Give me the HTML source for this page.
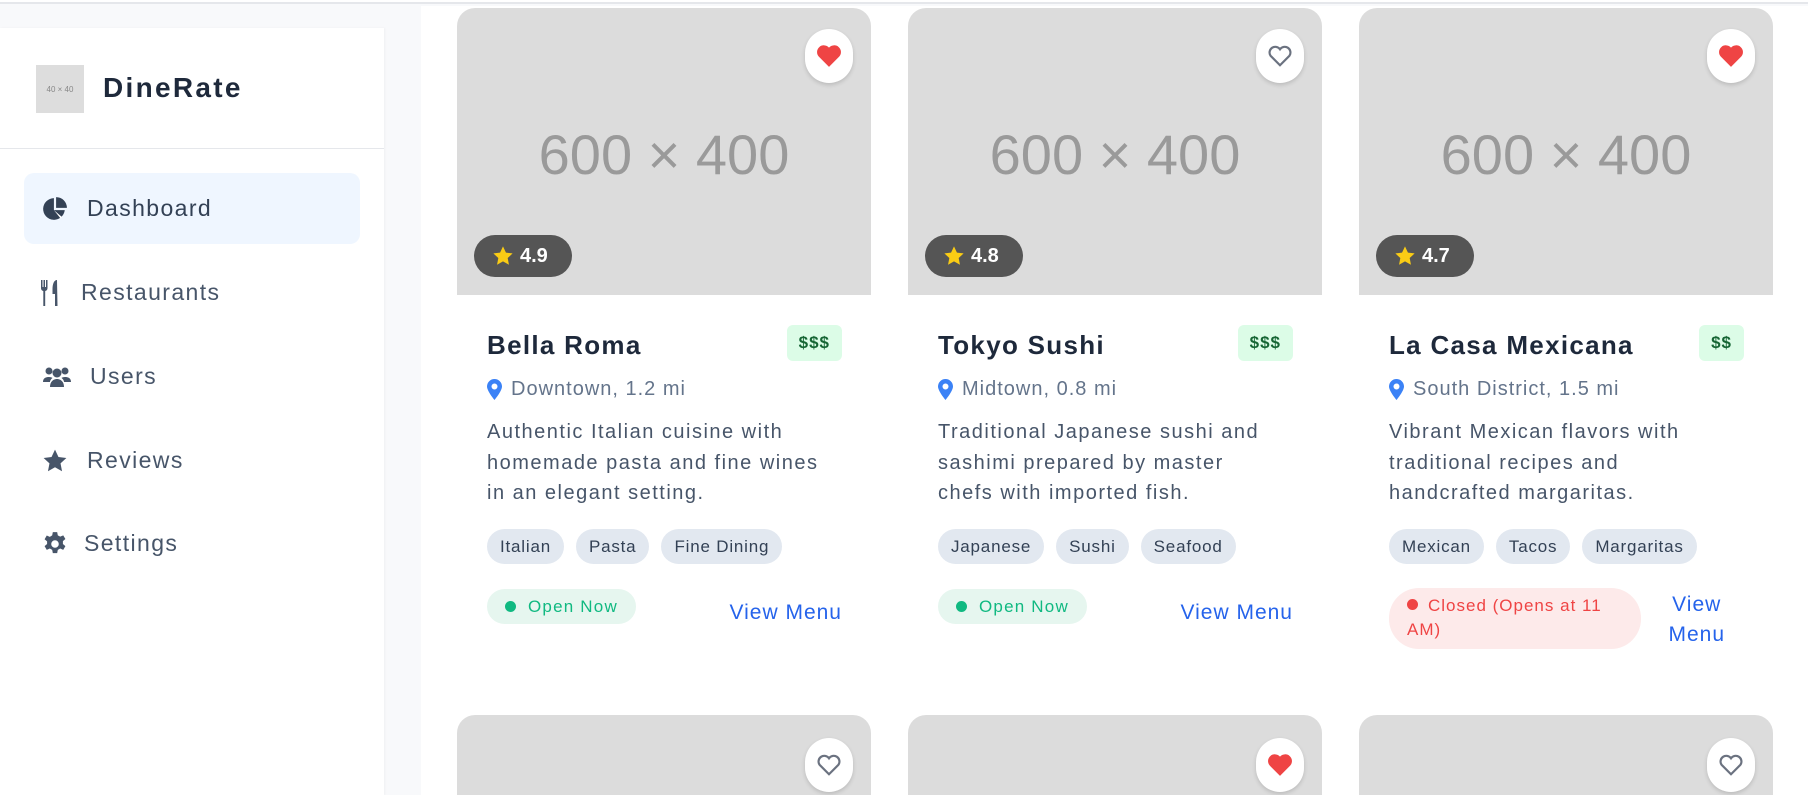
<!DOCTYPE html>
<html><head><meta charset="utf-8"><style>
*{margin:0;padding:0;box-sizing:border-box}
body{width:1808px;height:795px;overflow:hidden;background:#f8f9fb;font-family:"Liberation Sans",sans-serif;position:relative}
.topline{position:absolute;left:0;top:0;width:1808px;height:4px;background:#fff;border-bottom:2px solid #e5e7eb}
.side{position:absolute;left:0;top:28px;width:384px;height:767px;background:#fff;box-shadow:1px 0 2px rgba(0,0,0,.04)}
.logo{position:absolute;left:36px;top:37px;width:48px;height:48px;background:#ddd;color:#888;font-size:8px;display:flex;align-items:center;justify-content:center}
.brand{position:absolute;left:103px;top:44px;font-size:28px;font-weight:bold;color:#1e293b;letter-spacing:2.3px}
.div{position:absolute;left:0;top:120px;width:384px;height:1px;background:#e5e7eb}
.nav{position:absolute;left:24px;width:336px;height:71px;display:flex;align-items:center;font-size:23px;color:#475569;letter-spacing:1.4px}
.nav.act{background:#eff6ff;border-radius:10px;color:#334155}
.nav svg{position:absolute;left:18px}
.nav span{position:absolute}
.main{position:absolute;left:421px;top:6px;width:1387px;height:789px;background:#fff}
.card{position:absolute;width:414px;height:700px;background:#fff}
.img{position:absolute;left:0;top:0;width:414px;height:287px;background:#dcdcdc;border-radius:18px 18px 0 0}
.ph{position:absolute;left:0;width:100%;top:114px;text-align:center;font-size:56px;color:#9a9a9a}
.heart{position:absolute;left:348px;top:21px;width:48px;height:54px;border-radius:24px;background:#fff;box-shadow:0 2px 4px rgba(0,0,0,.15);display:flex;align-items:center;justify-content:center}
.rate{position:absolute;left:17px;top:227px;width:98px;height:42px;border-radius:21px;background:#555;color:#fff;font-weight:bold;font-size:20px;display:flex;align-items:center;padding-left:18px;gap:6px}
.title{position:absolute;left:30px;top:322px;font-size:26px;font-weight:bold;color:#1e293b;letter-spacing:1.3px}
.price{position:absolute;right:29px;top:317px;height:36px;padding:0 12px;border-radius:6px;background:#dcfce7;color:#166534;font-size:17px;font-weight:bold;display:flex;align-items:center;letter-spacing:1px}
.loc{position:absolute;left:30px;top:370px;font-size:20px;color:#64748b;display:flex;align-items:center;gap:9px;letter-spacing:1px}
.desc{position:absolute;left:30px;top:409px;font-size:20px;line-height:30.5px;color:#475569;letter-spacing:1.5px}
.tags{position:absolute;left:30px;top:521px;display:flex;gap:12px}
.tag{height:35px;padding:0 13px;border-radius:18px;background:#e2e8f0;color:#334155;font-size:17px;display:flex;align-items:center;letter-spacing:0.8px}
.open{position:absolute;left:30px;top:581px;height:35px;padding:0 18px 0 18px;border-radius:18px;background:#e6f6ef;color:#10b981;font-size:17px;display:flex;align-items:center;gap:12px;letter-spacing:1.2px}
.dot{width:11px;height:11px;border-radius:50%;background:currentColor;display:inline-block}
.vm{position:absolute;right:29px;top:593px;color:#2563eb;font-size:21px;letter-spacing:1px}
</style></head><body>
<div class="topline"></div>
<div class="side">
 <div class="logo">40 × 40</div>
 <div class="brand">DineRate</div>
 <div class="div"></div>
 <div class="nav act" style="top:145px"><svg width="26" height="26" viewBox="0 0 24 24"><path fill="#334155" d="M11 2A10 10 0 1 0 21 13H11z"/><path fill="#334155" d="M13 1v10h10A10 10 0 0 0 13 1z"/><path fill="#fff" d="M11 13l6 7.5 1.5-1z"/></svg><span style="left:63px">Dashboard</span></div>
 <div class="nav" style="top:229px"><svg width="22" height="26" viewBox="0 0 22 26" style="left:16px"><path fill="#475569" d="M1 0h1.5v7h1V0H5v7h1V0h1.5v8a3 3 0 0 1-2.3 3V26H3.3V11A3 3 0 0 1 1 8z"/><path fill="#475569" d="M17 0c-3 0-4.5 4-4.5 9v5H15v12h2.5z"/></svg><span style="left:57px">Restaurants</span></div>
 <div class="nav" style="top:313px"><svg width="30" height="24" viewBox="0 0 30 24"><circle cx="7" cy="6" r="3.5" fill="#475569"/><circle cx="23" cy="6" r="3.5" fill="#475569"/><circle cx="15" cy="8" r="4.5" fill="#475569"/><path fill="#475569" d="M1 17c0-4 3-5 6-5 2 0 3 .5 3.5 1C8.5 14.5 8 16 8 17zM29 17c0-4-3-5-6-5-2 0-3 .5-3.5 1 2 1.5 2.5 3 2.5 4zM8 22c0-5 3-8 7-8s7 3 7 8z"/></svg><span style="left:66px">Users</span></div>
 <div class="nav" style="top:397px"><svg width="26" height="26" viewBox="0 0 24 24"><path fill="#475569" d="M12 1.5l3.2 6.8 7.3.9-5.4 5 1.4 7.3L12 17.8l-6.5 3.7 1.4-7.3-5.4-5 7.3-.9z"/></svg><span style="left:63px">Reviews</span></div>
 <div class="nav" style="top:480px"><svg width="26" height="26" viewBox="0 0 24 24"><path fill="#475569" fill-rule="evenodd" d="M10 1h4l.6 3 2.2 1.2 2.8-1.2 2 3.4-2.3 2v2.6l2.3 2-2 3.4-2.8-1.2-2.2 1.2-.6 3h-4l-.6-3-2.2-1.2-2.8 1.2-2-3.4 2.3-2V9.6l-2.3-2 2-3.4 2.8 1.2L9.4 4zM12 8.5a3.5 3.5 0 1 0 0 7 3.5 3.5 0 0 0 0-7z"/></svg><span style="left:60px">Settings</span></div>
</div>
<div class="main"></div>

<div class="card" style="left:457px;top:8px">
 <div class="img"><div class="ph">600 × 400</div>
  <div class="heart"><svg width="26" height="24" viewBox="0 0 24 22"><path fill="#ef4444" d="M12 21L2.5 11.5A5.8 5.8 0 0 1 12 3.3a5.8 5.8 0 0 1 9.5 8.2z"/></svg></div>
  <div class="rate"><svg width="22" height="22" viewBox="0 0 24 24"><path fill="#facc15" d="M12 1.5l3.2 6.8 7.3.9-5.4 5 1.4 7.3L12 17.8l-6.5 3.7 1.4-7.3-5.4-5 7.3-.9z"/></svg>4.9</div></div>
 <div class="title">Bella Roma</div><div class="price">$$$</div>
 <div class="loc"><svg width="15" height="21" viewBox="0 0 15 21"><path fill="#3b82f6" d="M7.5 0A7.5 7.5 0 0 0 0 7.5C0 12 7.5 21 7.5 21S15 12 15 7.5A7.5 7.5 0 0 0 7.5 0zm0 4.5a3 3 0 1 1 0 6 3 3 0 0 1 0-6z"/></svg>Downtown, 1.2 mi</div>
 <div class="desc">Authentic Italian cuisine with<br>homemade pasta and fine wines<br>in an elegant setting.</div>
 <div class="tags"><div class="tag">Italian</div><div class="tag">Pasta</div><div class="tag">Fine Dining</div></div>
 <div class="open"><span class="dot"></span>Open Now</div><div class="vm">View Menu</div>
</div>

<div class="card" style="left:908px;top:8px">
 <div class="img"><div class="ph">600 × 400</div>
  <div class="heart"><svg width="26" height="24" viewBox="0 0 24 22"><path fill="none" stroke="#6b7280" stroke-width="2" d="M12 19.5L3.3 10.8A4.9 4.9 0 0 1 12 4.8a4.9 4.9 0 0 1 8.7 6z"/></svg></div>
  <div class="rate"><svg width="22" height="22" viewBox="0 0 24 24"><path fill="#facc15" d="M12 1.5l3.2 6.8 7.3.9-5.4 5 1.4 7.3L12 17.8l-6.5 3.7 1.4-7.3-5.4-5 7.3-.9z"/></svg>4.8</div></div>
 <div class="title">Tokyo Sushi</div><div class="price">$$$</div>
 <div class="loc"><svg width="15" height="21" viewBox="0 0 15 21"><path fill="#3b82f6" d="M7.5 0A7.5 7.5 0 0 0 0 7.5C0 12 7.5 21 7.5 21S15 12 15 7.5A7.5 7.5 0 0 0 7.5 0zm0 4.5a3 3 0 1 1 0 6 3 3 0 0 1 0-6z"/></svg>Midtown, 0.8 mi</div>
 <div class="desc">Traditional Japanese sushi and<br>sashimi prepared by master<br>chefs with imported fish.</div>
 <div class="tags"><div class="tag">Japanese</div><div class="tag">Sushi</div><div class="tag">Seafood</div></div>
 <div class="open"><span class="dot"></span>Open Now</div><div class="vm">View Menu</div>
</div>

<div class="card" style="left:1359px;top:8px">
 <div class="img"><div class="ph">600 × 400</div>
  <div class="heart"><svg width="26" height="24" viewBox="0 0 24 22"><path fill="#ef4444" d="M12 21L2.5 11.5A5.8 5.8 0 0 1 12 3.3a5.8 5.8 0 0 1 9.5 8.2z"/></svg></div>
  <div class="rate"><svg width="22" height="22" viewBox="0 0 24 24"><path fill="#facc15" d="M12 1.5l3.2 6.8 7.3.9-5.4 5 1.4 7.3L12 17.8l-6.5 3.7 1.4-7.3-5.4-5 7.3-.9z"/></svg>4.7</div></div>
 <div class="title">La Casa Mexicana</div><div class="price">$$</div>
 <div class="loc"><svg width="15" height="21" viewBox="0 0 15 21"><path fill="#3b82f6" d="M7.5 0A7.5 7.5 0 0 0 0 7.5C0 12 7.5 21 7.5 21S15 12 15 7.5A7.5 7.5 0 0 0 7.5 0zm0 4.5a3 3 0 1 1 0 6 3 3 0 0 1 0-6z"/></svg>South District, 1.5 mi</div>
 <div class="desc">Vibrant Mexican flavors with<br>traditional recipes and<br>handcrafted margaritas.</div>
 <div class="tags"><div class="tag">Mexican</div><div class="tag">Tacos</div><div class="tag">Margaritas</div></div>
 <div style="position:absolute;left:30px;top:580px;width:252px;height:61px;border-radius:30px;background:#fdeaea;color:#ef4444;font-size:17px;line-height:24px;padding:6px 18px 0 18px;letter-spacing:1px"><span class="dot" style="margin-right:10px;vertical-align:1px"></span>Closed (Opens at 11<br>AM)</div>
 <div class="vm" style="top:582px;right:48px;text-align:center;line-height:30px">View<br>Menu</div>
</div>

<div class="card" style="left:457px;top:715px;height:80px"><div class="img" style="height:80px"><div class="heart" style="top:23px"><svg width="26" height="24" viewBox="0 0 24 22"><path fill="none" stroke="#6b7280" stroke-width="2" d="M12 19.5L3.3 10.8A4.9 4.9 0 0 1 12 4.8a4.9 4.9 0 0 1 8.7 6z"/></svg></div></div></div>
<div class="card" style="left:908px;top:715px;height:80px"><div class="img" style="height:80px"><div class="heart" style="top:23px"><svg width="26" height="24" viewBox="0 0 24 22"><path fill="#ef4444" d="M12 21L2.5 11.5A5.8 5.8 0 0 1 12 3.3a5.8 5.8 0 0 1 9.5 8.2z"/></svg></div></div></div>
<div class="card" style="left:1359px;top:715px;height:80px"><div class="img" style="height:80px"><div class="heart" style="top:23px"><svg width="26" height="24" viewBox="0 0 24 22"><path fill="none" stroke="#6b7280" stroke-width="2" d="M12 19.5L3.3 10.8A4.9 4.9 0 0 1 12 4.8a4.9 4.9 0 0 1 8.7 6z"/></svg></div></div></div>
</body></html>
